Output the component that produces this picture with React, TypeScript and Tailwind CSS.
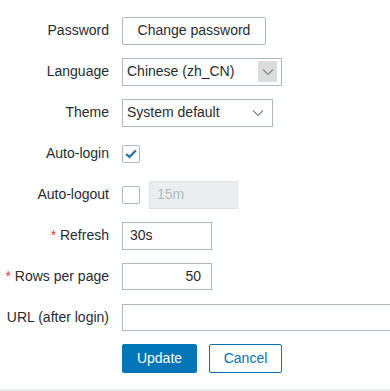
import React from "react";

const Chevron = () => (
  <svg width="12" height="8" viewBox="0 0 12 8" fill="none">
    <path d="M1 1.5 L6 6.5 L11 1.5" stroke="#7a8a93" strokeWidth="1.2" />
  </svg>
);

function Row({ label, required, children }: { label: string; required?: boolean; children?: React.ReactNode }) {
  return (
    <div className="flex h-[41px] items-center">
      <div className="w-[110px] shrink-0 pr-[1px] text-right text-[14px] text-[#1f2c33]">
        {required && <span className="text-[#e33734]">* </span>}
        {label}
      </div>
      <div className="ml-[12px] flex flex-1 items-center gap-[9px]">{children}</div>
    </div>
  );
}

export default function App() {
  return (
    <div
      className="relative h-[391px] w-[390px] overflow-hidden bg-white pt-[10px]"
      style={{ fontFamily: '"Liberation Sans", Arial, sans-serif' }}
    >
      <Row label="Password">
        <button className="h-[28px] w-[144px] rounded-[2px] border border-[#acbbc2] bg-white text-[14px] text-[#1f2c33]">
          Change password
        </button>
      </Row>
      <Row label="Language">
        <div className="flex h-[28px] w-[160px] items-center justify-between border border-[#acbbc2] bg-white pl-[4px] pr-[4px] text-[14px] text-[#1f2c33]">
          <span>Chinese (zh_CN)</span>
          <span className="flex h-[21px] w-[19px] items-center justify-center bg-[#dcdcdc]">
            <Chevron />
          </span>
        </div>
      </Row>
      <Row label="Theme">
        <div className="flex h-[28px] w-[151px] items-center justify-between border border-[#acbbc2] bg-white pl-[4px] pr-[8px] text-[14px] text-[#1f2c33]">
          <span>System default</span>
          <Chevron />
        </div>
      </Row>
      <Row label="Auto-login">
        <div className="flex h-[18px] w-[18px] items-center justify-center rounded-[2px] border border-[#acbbc2] bg-white">
          <svg width="12" height="10" viewBox="0 0 12 10" fill="none">
            <path d="M1.2 5 L4.5 8 L10.8 1.5" stroke="#1777b4" strokeWidth="2.2" />
          </svg>
        </div>
      </Row>
      <Row label="Auto-logout">
        <div className="h-[18px] w-[18px] rounded-[2px] border border-[#acbbc2] bg-white" />
        <div className="flex h-[28px] w-[89px] items-center border border-[#dde3e6] bg-[#ebeef0] pl-[7px] text-[14px] text-[#acbbc2]">
          15m
        </div>
      </Row>
      <Row label="Refresh" required>
        <div className="flex h-[28px] w-[90px] items-center border border-[#acbbc2] bg-white pl-[7px] text-[14px] text-[#1f2c33]">
          30s
        </div>
      </Row>
      <Row label="Rows per page" required>
        <div className="flex h-[27px] w-[90px] items-center justify-end border border-[#acbbc2] bg-white pr-[10px] text-[14px] text-[#1f2c33]">
          50
        </div>
      </Row>
      <Row label="URL (after login)">
        <div className="h-[27px] w-[300px] shrink-0 border border-[#acbbc2] bg-white" />
      </Row>
      <div className="flex h-[41px] items-center pl-[122px] gap-[12px]">
        <button className="h-[29px] w-[75px] rounded-[2px] border border-[#0275b8] bg-[#0275b8] text-[14px] text-white">
          Update
        </button>
        <button className="h-[29px] w-[73px] rounded-[2px] border border-[#0275b8] bg-white text-[14px] text-[#0275b8]">
          Cancel
        </button>
      </div>
      <div className="absolute bottom-0 left-0 h-[2px] w-full bg-[#ebeef0]" />
    </div>
  );
}
